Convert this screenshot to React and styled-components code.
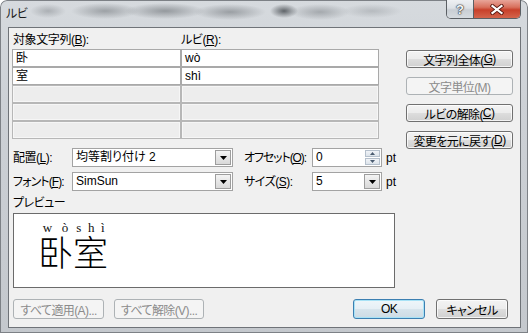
import React from 'react';
import styled, { createGlobalStyle, css } from 'styled-components';

const UI = `"Liberation Sans", "Noto Sans CJK JP", sans-serif`;

const Global = createGlobalStyle`
  html, body { margin: 0; padding: 0; background: #ffffff; }
  body { font-family: ${UI}; font-size: 12px; color: #000; font-feature-settings: "palt" 1; }
  * { box-sizing: border-box; }
`;

const Frame = styled.div`
  width: 528px;
  height: 333px;
  display: flex;
  flex-direction: column;
  border-radius: 7px 7px 0 0;
  box-shadow: inset 0 0 0 1px #7d8186;
  background:
    radial-gradient(18px 7px at 48px 11px, rgba(120,125,130,.45), transparent),
    radial-gradient(34px 8px at 105px 11px, rgba(100,105,110,.50), transparent),
    radial-gradient(40px 8px at 165px 11px, rgba(95,100,105,.55), transparent),
    radial-gradient(36px 8px at 230px 12px, rgba(95,100,105,.50), transparent),
    radial-gradient(14px 7px at 284px 11px, rgba(45,50,55,.70), transparent),
    radial-gradient(30px 8px at 320px 12px, rgba(105,110,115,.45), transparent),
    radial-gradient(30px 7px at 372px 11px, rgba(125,130,135,.35), transparent),
    linear-gradient(180deg, #d6dade 0%, #cdd1d6 30%, #c4c8cd 100%);
`;

const TitleBar = styled.div`
  height: 27px;
  flex: 0 0 27px;
  display: flex;
  align-items: flex-start;
  padding-left: 6px;
`;

const Title = styled.div`
  margin-top: 7px;
  line-height: 14px;
  font-size: 12px;
  letter-spacing: -0.5px;
  color: #1a1a1a;
`;

const CaptionGroup = styled.div`
  margin-left: auto;
  margin-right: 7px;
  display: flex;
  height: 19px;
  border: 1px solid #5b5f64;
  border-top: none;
  border-radius: 0 0 5px 5px;
  overflow: hidden;
`;

const HelpButton = styled.div`
  width: 27px;
  border-right: 1px solid #5b5f64;
  background: linear-gradient(180deg, #eef0f3 0%, #dde1e6 45%, #c9ced4 55%, #d6dbe0 100%);
  display: flex;
  align-items: center;
  justify-content: center;
  font: bold 13px "Liberation Sans", sans-serif;
  color: #f7f8fa;
  text-shadow: 0 0 1px #2c3036, 0 0 1px #2c3036, 0 0 2px #2c3036;
`;

const CloseButton = styled.div`
  width: 46px;
  background: linear-gradient(180deg, #e8a599 0%, #d8705d 40%, #c8402a 55%, #d4644c 100%);
  display: flex;
  align-items: center;
  justify-content: center;
`;

const Body = styled.div`
  flex: 1;
  display: flex;
  padding: 0 7px 5px 8px;
`;

const Client = styled.div`
  flex: 1;
  border: 1px solid #6f7378;
  background: #f0f0f0;
  padding: 4px 0 0 3px;
  display: grid;
  grid-template-columns: 383px 107px;
  column-gap: 11px;
  align-content: start;
  grid-template-areas:
    "head side"
    "table side"
    "f1 side"
    "f2 ."
    "pl ."
    "pv ."
    "bot bot";
`;

const HeaderRow = styled.div`
  grid-area: head;
  display: grid;
  grid-template-columns: 169px 198px;
  height: 17px;
`;

const HeadLabel = styled.div`
  line-height: 16px;
  padding-left: ${p => p.$pad || 0}px;
  letter-spacing: -0.4px;
  white-space: nowrap;
`;

const Table = styled.div`
  grid-area: table;
  display: grid;
  grid-template-columns: 169px 198px;
  grid-auto-rows: 18px;
`;

const Cell = styled.div`
  border: 1px solid ${p => (p.$empty ? '#b7b7b7' : '#a9a9a9')};
  background: ${p => (p.$empty ? '#ededed' : '#ffffff')};
  box-shadow: ${p => (p.$empty ? 'inset 0 0 0 1px #f6f6f6' : 'none')};
  padding-left: 3px;
  line-height: 16px;
  white-space: nowrap;
`;

const SideButtons = styled.div`
  grid-area: side;
  align-self: start;
  margin-top: 18px;
  display: flex;
  flex-direction: column;
  gap: 9px;
`;

const Button = styled.button`
  width: ${p => p.$w}px;
  height: ${p => p.$h || 18}px;
  padding: 0;
  margin: 0;
  font: 12px ${UI};
  font-feature-settings: "palt" 1;
  letter-spacing: -0.6px;
  color: #000;
  border: 1px solid #707070;
  border-radius: 3px;
  background: linear-gradient(180deg, #f3f3f3 0%, #ececec 48%, #dddddd 52%, #d0d0d0 100%);
  box-shadow: inset 0 0 0 1px rgba(255,255,255,.75);
  display: flex;
  align-items: center;
  justify-content: center;
  white-space: nowrap;
  ${p => p.$default && css`
    border-color: #3c7fb1;
    box-shadow: inset 0 0 0 1px #a8e2f6;
    background: linear-gradient(180deg, #eef6fa 0%, #e6eff5 48%, #d7e4ec 52%, #cddbe4 100%);
  `}
  ${p => p.disabled && css`
    color: #8b8b8b;
    border-color: #adb2b5;
    background: #f4f4f4;
    box-shadow: none;
  `}
`;

const FieldRow = styled.div`
  grid-area: ${p => p.$area};
  margin-top: ${p => p.$mt}px;
  height: 19px;
  display: flex;
  align-items: center;
  white-space: nowrap;
`;

const FieldLabel = styled.div`
  width: ${p => p.$w}px;
  flex: 0 0 ${p => p.$w}px;
  margin-left: ${p => p.$ml || 0}px;
  padding-left: 1px;
  line-height: 16px;
  letter-spacing: ${p => p.$ls ?? -0.5}px;
`;

const Combo = styled.div`
  width: ${p => p.$w}px;
  flex: 0 0 ${p => p.$w}px;
  height: 19px;
  border: 1px solid #a3a3a3;
  background: #fff;
  display: flex;
`;

const ComboValue = styled.div`
  flex: 1;
  padding-left: 3px;
  line-height: 17px;
`;

const DropButton = styled.div`
  width: 16px;
  margin: 1px;
  border: 1px solid #9d9d9d;
  background: linear-gradient(180deg, #f4f4f4 0%, #e6e6e6 50%, #d9d9d9 100%);
  display: flex;
  align-items: center;
  justify-content: center;
`;

const SpinBox = styled.div`
  width: 15px;
  margin: 1px;
  display: flex;
  flex-direction: column;
  gap: 1px;
`;

const SpinHalf = styled.div`
  flex: 1;
  border: 1px solid #b5c0cc;
  background: linear-gradient(180deg, #f1f4f8 0%, #dce3ea 100%);
  display: flex;
  align-items: center;
  justify-content: center;
`;

const Unit = styled.div`
  margin-left: 4px;
  line-height: 16px;
`;

const PreviewLabel = styled.div`
  grid-area: pl;
  margin-top: 4px;
  line-height: 16px;
  padding-left: 1px;
  letter-spacing: -0.5px;
`;

const PreviewBox = styled.div`
  grid-area: pv;
  margin-top: 2px;
  margin-left: 1px;
  width: 382px;
  height: 75px;
  border: 1px solid #6b6b6b;
  background: #fff;
  padding: 7px 0 0 24px;
  display: flex;
  align-items: flex-start;
`;

const RubyChar = styled.div`
  width: 35px;
  display: flex;
  flex-direction: column;
`;

const RubyText = styled.div`
  display: flex;
  justify-content: space-around;
  height: 13px;
  font: 13px/13px "Liberation Serif", serif;
  color: #111;
`;

const BaseText = styled.div`
  font-family: "Noto Sans CJK SC", "Noto Sans CJK JP", sans-serif;
  font-feature-settings: normal;
  font-size: 35px;
  line-height: 34px;
  font-weight: 200;
  color: #000;
`;

const BottomBar = styled.div`
  grid-area: bot;
  margin-top: 11px;
  display: flex;
  justify-content: space-between;
  padding: 0 5px 0 1px;
`;

const ButtonGroup = styled.div`
  display: flex;
  gap: ${p => p.$gap}px;
`;

const Arrow = ({ up, color = '#000', w = 7, h = 4 }) => (
  <svg width={w} height={h} viewBox={`0 0 ${w} ${h}`}>
    {up ? (
      <polygon points={`0,${h} ${w},${h} ${w / 2},0`} fill={color} />
    ) : (
      <polygon points={`0,0 ${w},0 ${w / 2},${h}`} fill={color} />
    )}
  </svg>
);

const CloseGlyph = () => (
  <svg width="14" height="11" viewBox="0 0 14 11">
    <path d="M2.5 2 L11.5 9 M11.5 2 L2.5 9" stroke="#5a1a12" strokeWidth="4" strokeLinecap="square" fill="none" />
    <path d="M2.5 2 L11.5 9 M11.5 2 L2.5 9" stroke="#ffffff" strokeWidth="2.2" strokeLinecap="square" fill="none" />
  </svg>
);

const rows = [
  ['卧', 'wò'],
  ['室', 'shì'],
  ['', ''],
  ['', ''],
  ['', ''],
];

const ruby = [
  { base: '卧', marks: ['w', 'ò'] },
  { base: '室', marks: ['s', 'h', 'ì'] },
];

export default function App() {
  return (
    <>
      <Global />
      <Frame>
        <TitleBar>
          <Title>ルビ</Title>
          <CaptionGroup>
            <HelpButton>?</HelpButton>
            <CloseButton><CloseGlyph /></CloseButton>
          </CaptionGroup>
        </TitleBar>
        <Body>
          <Client>
            <HeaderRow>
              <HeadLabel $pad={1}>対象文字列(<u>B</u>):</HeadLabel>
              <HeadLabel>ルビ(<u>R</u>):</HeadLabel>
            </HeaderRow>
            <Table>
              {rows.map((r, i) => (
                <React.Fragment key={i}>
                  <Cell $empty={!r[0]}>{r[0]}</Cell>
                  <Cell $empty={!r[1]}>{r[1]}</Cell>
                </React.Fragment>
              ))}
            </Table>
            <SideButtons>
              <Button $w={107}>文字列全体(<u>G</u>)</Button>
              <Button $w={107} disabled>文字単位(M)</Button>
              <Button $w={107}>ルビの解除(<u>C</u>)</Button>
              <Button $w={107}>変更を元に戻す(<u>D</u>)</Button>
            </SideButtons>
            <FieldRow $area="f1" $mt={9}>
              <FieldLabel $w={60}>配置(<u>L</u>):</FieldLabel>
              <Combo $w={161}>
                <ComboValue>均等割り付け 2</ComboValue>
                <DropButton><Arrow /></DropButton>
              </Combo>
              <FieldLabel $w={69} $ml={10} $ls={-1.1}>オフセット(<u>O</u>):</FieldLabel>
              <Combo $w={70}>
                <ComboValue>0</ComboValue>
                <SpinBox>
                  <SpinHalf><Arrow up w={5} h={3} color="#4a5b70" /></SpinHalf>
                  <SpinHalf><Arrow w={5} h={3} color="#4a5b70" /></SpinHalf>
                </SpinBox>
              </Combo>
              <Unit>pt</Unit>
            </FieldRow>
            <FieldRow $area="f2" $mt={5}>
              <FieldLabel $w={60} $ls={-0.9}>フォント(<u>F</u>):</FieldLabel>
              <Combo $w={161}>
                <ComboValue>SimSun</ComboValue>
                <DropButton><Arrow /></DropButton>
              </Combo>
              <FieldLabel $w={69} $ml={10}>サイズ(<u>S</u>):</FieldLabel>
              <Combo $w={70}>
                <ComboValue>5</ComboValue>
                <DropButton><Arrow /></DropButton>
              </Combo>
              <Unit>pt</Unit>
            </FieldRow>
            <PreviewLabel>プレビュー</PreviewLabel>
            <PreviewBox>
              {ruby.map((r, i) => (
                <RubyChar key={i}>
                  <RubyText>
                    {r.marks.map((m, j) => <span key={j}>{m}</span>)}
                  </RubyText>
                  <BaseText>{r.base}</BaseText>
                </RubyChar>
              ))}
            </PreviewBox>
            <BottomBar>
              <ButtonGroup $gap={10}>
                <Button $w={91} $h={20} disabled>すべて適用(A)...</Button>
                <Button $w={90} $h={20} disabled>すべて解除(V)...</Button>
              </ButtonGroup>
              <ButtonGroup $gap={11}>
                <Button $w={72} $h={20} $default>OK</Button>
                <Button $w={72} $h={20}>キャンセル</Button>
              </ButtonGroup>
            </BottomBar>
          </Client>
        </Body>
      </Frame>
    </>
  );
}
